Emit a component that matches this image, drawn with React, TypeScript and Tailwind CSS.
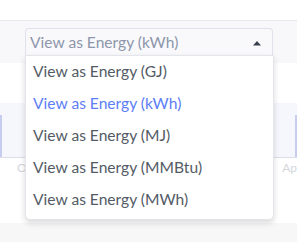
import { useState } from "react";

const units = ["GJ", "kWh", "MJ", "MMBtu", "MWh"];

export default function App() {
  const [selected, setSelected] = useState("kWh");

  return (
    <div
      className="relative h-[242px] w-[297px] overflow-hidden bg-white"
      style={{ fontFamily: "Lato, 'Open Sans', sans-serif" }}
    >
      <div className="h-[21px] border-b border-[#e6e8ee]" />
      {/* toolbar */}
      <div className="relative h-[42px] bg-[#f8f8fa] pl-[25px] pr-[24px] pt-[7px]">
        <div className="flex h-[28px] items-center justify-between rounded-t-[4px] border border-b-0 border-[#dfe2ea] bg-[#f9f9fc] pl-[4px] pr-[10px]">
          <span className="text-[15.6px] text-[#8d96ab]">
            View as Energy ({selected})
          </span>
          <svg width="10" height="6" viewBox="0 0 10 6">
            <path d="M1 5.5 L5 1 L9 5.5 Z" fill="#3a3f4d" />
          </svg>
        </div>
        {/* menu */}
        <ul className="absolute left-[25px] top-[34px] z-10 w-[249px] rounded-b-[5px] border border-[#e3e5ea] bg-white pb-[3px] shadow-[0_3px_6px_rgba(0,0,0,0.15)]">
          {units.map((u) => (
            <li
              key={u}
              onClick={() => setSelected(u)}
              className={`flex h-[32px] cursor-pointer items-center pl-[7px] text-[15.6px] ${
                u === selected ? "text-[#5d7ef5]" : "text-[#545b66]"
              }`}
            >
              View as Energy ({u})
            </li>
          ))}
        </ul>
      </div>
      {/* chart */}
      <div className="h-[40px]" />
      <div className="flex h-[55px] justify-between border-b border-[#dcdfe6] bg-[#f6f7fd]">
        <div className="mt-[12px] w-[2px] bg-[#c9ccf1]" />
        <div className="mt-[12px] w-[2px] bg-[#c9ccf1]" />
      </div>
      <div className="flex h-[65px] justify-between px-[17px] pt-[1px] text-[12px] text-[#d3d6dd]">
        <span>O</span>
        <span className="-mr-[17px]">Ap</span>
      </div>
      <div className="h-[20px] bg-[#f7f7f8]" />
    </div>
  );
}
